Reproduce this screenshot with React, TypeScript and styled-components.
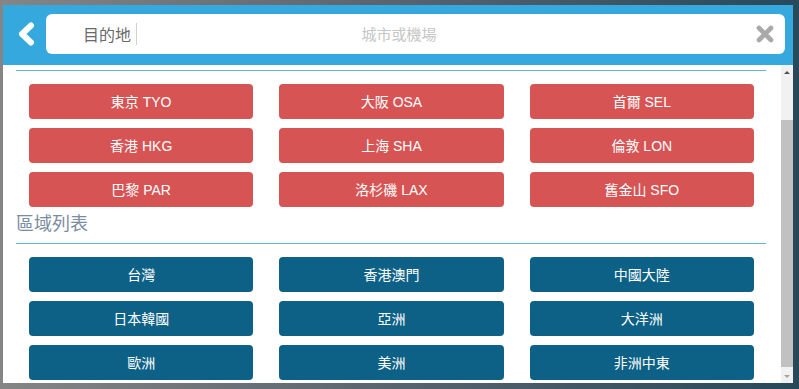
import React, { useLayoutEffect, useRef } from "react";
import styled, { createGlobalStyle } from "styled-components";

const GlobalStyle = createGlobalStyle`
  html, body {
    margin: 0;
    padding: 0;
    height: 100%;
  }
  body {
    font-family: "Liberation Sans", "Noto Sans CJK TC", sans-serif;
  }
  * {
    box-sizing: border-box;
  }
`;

const hotCities = [
  "東京 TYO",
  "大阪 OSA",
  "首爾 SEL",
  "香港 HKG",
  "上海 SHA",
  "倫敦 LON",
  "巴黎 PAR",
  "洛杉磯 LAX",
  "舊金山 SFO"
];

const regions = [
  "台灣",
  "香港澳門",
  "中國大陸",
  "日本韓國",
  "亞洲",
  "大洋洲",
  "歐洲",
  "美洲",
  "非洲中東"
];

const Page = styled.div`
  height: 100vh;
  padding: 5px 6px 0 3px;
  background: linear-gradient(90deg, #858585 0%, #5d6670 45%, #27495a 100%);
`;

const Modal = styled.div`
  height: 378px;
  display: flex;
  flex-direction: column;
  background: #fff;
`;

const Header = styled.div`
  height: 60px;
  flex-shrink: 0;
  display: flex;
  align-items: flex-start;
  padding: 9px 8px 0 0;
  background: #35a8de;
`;

const BackButton = styled.button`
  width: 43px;
  height: 40px;
  padding: 0 0 0 3px;
  border: none;
  background: transparent;
  display: flex;
  align-items: center;
  justify-content: center;
  cursor: pointer;
`;

const SearchBox = styled.div`
  flex: 1;
  height: 40px;
  display: flex;
  align-items: center;
  background: #fff;
  border-radius: 6px;
`;

const Label = styled.span`
  padding-left: 37px;
  font-size: 16px;
  color: #6a6a6a;
  white-space: nowrap;
`;

const Divider = styled.span`
  width: 1px;
  height: 22px;
  margin-left: 5px;
  background: #d2d2d2;
`;

const SearchInput = styled.input`
  flex: 1;
  min-width: 0;
  height: 100%;
  padding: 0 84px 0 0;
  border: none;
  outline: none;
  background: transparent;
  text-align: center;
  font-family: inherit;
  font-size: 15px;
  color: #333;
  caret-color: #2f62d6;

  &::placeholder {
    color: #c6c6c6;
  }
`;

const ClearButton = styled.button`
  width: 40px;
  height: 40px;
  border: none;
  background: transparent;
  display: flex;
  align-items: center;
  justify-content: center;
  padding: 0;
  cursor: pointer;
`;

const Body = styled.div`
  flex: 1;
  min-height: 0;
  display: flex;
`;

const ScrollArea = styled.div`
  flex: 1;
  overflow-y: auto;
  scrollbar-width: none;
  padding: 22px 15px 5px 13px;

  &::-webkit-scrollbar {
    display: none;
  }
`;

const ScrollBar = styled.div`
  width: 12px;
  flex-shrink: 0;
  display: flex;
  flex-direction: column;
  background: #f1f1f1;
`;

const Arrow = styled.div<{ $down?: boolean }>`
  height: 14px;
  flex-shrink: 0;
  display: flex;
  align-items: center;
  justify-content: center;

  &::before {
    content: "";
    border-left: 3px solid transparent;
    border-right: 3px solid transparent;
    ${(p) =>
      p.$down
        ? "border-top: 3px solid #a3a3a3;"
        : "border-bottom: 3px solid #505050;"}
  }
`;

const Track = styled.div`
  flex: 1;
  padding-top: 41px;
`;

const Thumb = styled.div`
  height: 247px;
  background: #c1c1c1;
`;

const Title = styled.h3`
  margin: 7px 0 0;
  padding-bottom: 9px;
  border-bottom: 1px solid #66b7cd;
  font-size: 18px;
  line-height: 20px;
  font-weight: normal;
  color: #7b8c9f;
`;

const Grid = styled.div`
  display: grid;
  grid-template-columns: repeat(3, 1fr);
  column-gap: 26px;
  row-gap: 9px;
  margin-top: 13px;
  padding: 0 12px 0 13px;
`;

const Choice = styled.button<{ $tone: string }>`
  height: 35px;
  padding: 0 0 1px;
  border: none;
  border-radius: 4px;
  background: ${(p) => p.$tone};
  color: #fff;
  font-family: inherit;
  font-size: 14px;
  cursor: pointer;
`;

const Section = ({
  title,
  items,
  tone
}: {
  title: string;
  items: string[];
  tone: string;
}) => (
  <section>
    <Title>{title}</Title>
    <Grid>
      {items.map((item) => (
        <Choice key={item} $tone={tone}>
          {item}
        </Choice>
      ))}
    </Grid>
  </section>
);

const App: React.FC = () => {
  const scrollRef = useRef<HTMLDivElement>(null);

  // the list is shown already scrolled past its first heading
  useLayoutEffect(() => {
    if (scrollRef.current) scrollRef.current.scrollTop = 53;
  }, []);

  return (
    <Page>
      <GlobalStyle />
      <Modal>
        <Header>
          <BackButton aria-label="返回">
            <svg width="18" height="24" viewBox="0 0 18 24">
              <polyline
                points="14,3.5 5,12 14,20.5"
                fill="none"
                stroke="#fff"
                strokeWidth="6"
                strokeLinecap="round"
                strokeLinejoin="round"
              />
            </svg>
          </BackButton>
          <SearchBox>
            <Label>目的地</Label>
            <Divider />
            <SearchInput placeholder="城市或機場" autoFocus />
            <ClearButton aria-label="清除">
              <svg width="20" height="18" viewBox="0 0 20 18">
                <path
                  d="M4 3 L16 15 M16 3 L4 15"
                  stroke="#a9a9a9"
                  strokeWidth="4.6"
                  strokeLinecap="round"
                />
              </svg>
            </ClearButton>
          </SearchBox>
        </Header>
        <Body>
          <ScrollArea ref={scrollRef}>
            <Section title="熱門城市" items={hotCities} tone="#d75454" />
            <Section title="區域列表" items={regions} tone="#0e6186" />
          </ScrollArea>
          <ScrollBar>
            <Arrow />
            <Track>
              <Thumb />
            </Track>
            <Arrow $down />
          </ScrollBar>
        </Body>
      </Modal>
    </Page>
  );
};

export default App;
